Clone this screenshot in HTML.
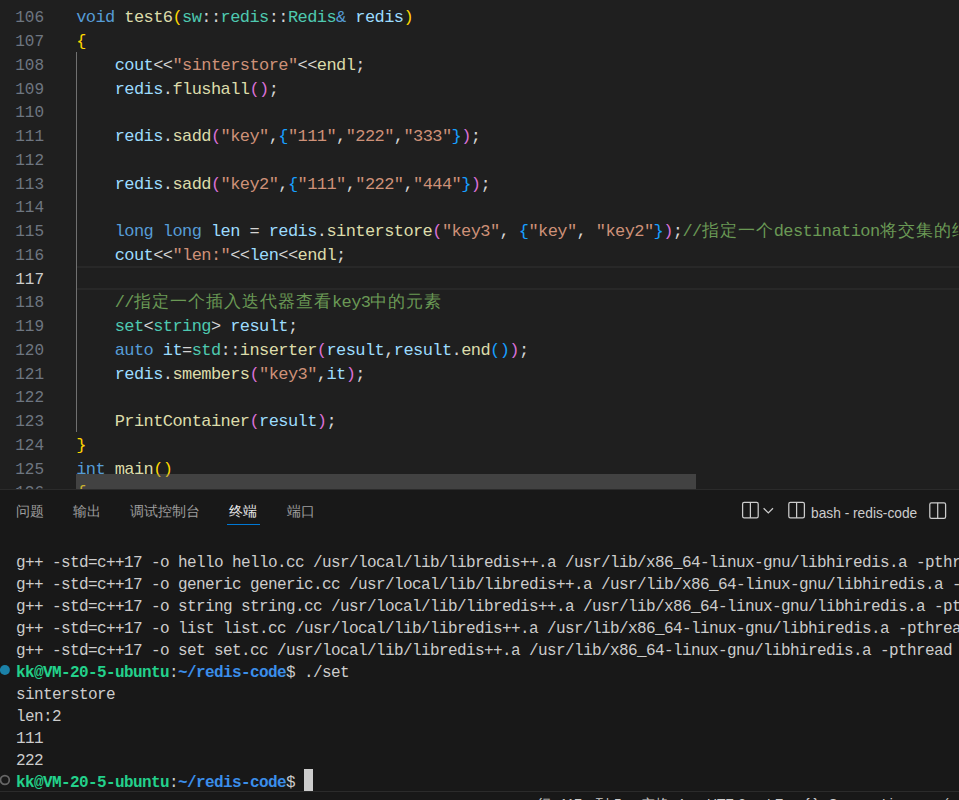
<!DOCTYPE html>
<html><head><meta charset="utf-8">
<style>
*{margin:0;padding:0;box-sizing:border-box}
html,body{width:959px;height:800px;overflow:hidden;background:#1f1f1f}
body{position:relative;font-family:"Liberation Mono",monospace}
#ed{position:absolute;left:0;top:0;width:959px;height:489px;background:#1f1f1f;overflow:hidden}
.ln{position:absolute;left:0;width:44px;text-align:right;font-size:16.03px;line-height:23.75px;height:23.75px;color:#6E7681;white-space:pre}
.ln.act{color:#CCCCCC}
.cl{position:absolute;margin-top:-1px;left:76.25px;font-size:17px;letter-spacing:-0.5815px;line-height:23.75px;height:23.75px;white-space:pre;color:#D4D4D4}
.cj{letter-spacing:1px;font-size:17px;line-height:0}
#hl{position:absolute;left:77px;top:266px;width:882px;height:24px;border-top:2px solid #282828;border-bottom:2px solid #282828}
#guide{position:absolute;left:76px;top:52px;width:1px;height:380px;background:#707070}
#hscroll{position:absolute;left:76px;top:474px;width:620px;height:15px;background:rgba(121,121,121,0.4)}
#bord{position:absolute;left:0;top:489px;width:959px;height:1px;background:#2b2b2b}
#panel{position:absolute;left:0;top:490px;width:959px;height:301px;background:#181818;overflow:hidden}
.tab{position:absolute;top:3.5px;font-size:13.75px;line-height:35px;color:#9D9D9D;font-family:"Liberation Sans",sans-serif;white-space:pre}
.tab.act{color:#E7E7E7}
#uline{position:absolute;left:227px;top:34px;width:33px;height:1px;background:#0078D4}
.tl{position:absolute;left:16px;font-size:16px;letter-spacing:-0.6014px;line-height:22px;height:22px;white-space:pre;color:#CCCCCC}
.tl b{font-weight:bold}
.st{position:absolute;top:3px;font-family:"Liberation Sans",sans-serif;font-size:13.75px;line-height:20px;color:#CCCCCC;white-space:pre}
#status{position:absolute;left:0;top:791px;width:959px;height:9px;background:#181818;border-top:1px solid #2b2b2b;overflow:hidden}
</style></head><body>
<div id="ed">
<div id="hl"></div>
<div id="guide"></div>
<div class="ln" style="top:7.25px">106</div>
<div class="cl" style="top:7.25px"><span style="color:#569CD6">void </span><span style="color:#DCDCAA">test6</span><span style="color:#FFD700">(</span><span style="color:#4EC9B0">sw</span><span style="color:#D4D4D4">::</span><span style="color:#4EC9B0">redis</span><span style="color:#D4D4D4">::</span><span style="color:#4EC9B0">Redis</span><span style="color:#569CD6">&amp;</span><span style="color:#D4D4D4"> </span><span style="color:#9CDCFE">redis</span><span style="color:#FFD700">)</span></div>
<div class="ln" style="top:31.00px">107</div>
<div class="cl" style="top:31.00px"><span style="color:#FFD700">{</span></div>
<div class="ln" style="top:54.75px">108</div>
<div class="cl" style="top:54.75px"><span style="color:#D4D4D4">    </span><span style="color:#9CDCFE">cout</span><span style="color:#D4D4D4">&lt;&lt;</span><span style="color:#CE9178">&quot;sinterstore&quot;</span><span style="color:#D4D4D4">&lt;&lt;</span><span style="color:#DCDCAA">endl</span><span style="color:#D4D4D4">;</span></div>
<div class="ln" style="top:78.50px">109</div>
<div class="cl" style="top:78.50px"><span style="color:#D4D4D4">    </span><span style="color:#9CDCFE">redis</span><span style="color:#D4D4D4">.</span><span style="color:#DCDCAA">flushall</span><span style="color:#DA70D6">()</span><span style="color:#D4D4D4">;</span></div>
<div class="ln" style="top:102.25px">110</div>
<div class="ln" style="top:126.00px">111</div>
<div class="cl" style="top:126.00px"><span style="color:#D4D4D4">    </span><span style="color:#9CDCFE">redis</span><span style="color:#D4D4D4">.</span><span style="color:#DCDCAA">sadd</span><span style="color:#DA70D6">(</span><span style="color:#CE9178">&quot;key&quot;</span><span style="color:#D4D4D4">,</span><span style="color:#179FFF">{</span><span style="color:#CE9178">&quot;111&quot;</span><span style="color:#D4D4D4">,</span><span style="color:#CE9178">&quot;222&quot;</span><span style="color:#D4D4D4">,</span><span style="color:#CE9178">&quot;333&quot;</span><span style="color:#179FFF">}</span><span style="color:#DA70D6">)</span><span style="color:#D4D4D4">;</span></div>
<div class="ln" style="top:149.75px">112</div>
<div class="ln" style="top:173.50px">113</div>
<div class="cl" style="top:173.50px"><span style="color:#D4D4D4">    </span><span style="color:#9CDCFE">redis</span><span style="color:#D4D4D4">.</span><span style="color:#DCDCAA">sadd</span><span style="color:#DA70D6">(</span><span style="color:#CE9178">&quot;key2&quot;</span><span style="color:#D4D4D4">,</span><span style="color:#179FFF">{</span><span style="color:#CE9178">&quot;111&quot;</span><span style="color:#D4D4D4">,</span><span style="color:#CE9178">&quot;222&quot;</span><span style="color:#D4D4D4">,</span><span style="color:#CE9178">&quot;444&quot;</span><span style="color:#179FFF">}</span><span style="color:#DA70D6">)</span><span style="color:#D4D4D4">;</span></div>
<div class="ln" style="top:197.25px">114</div>
<div class="ln" style="top:221.00px">115</div>
<div class="cl" style="top:221.00px"><span style="color:#D4D4D4">    </span><span style="color:#569CD6">long</span><span style="color:#D4D4D4"> </span><span style="color:#569CD6">long</span><span style="color:#9CDCFE"> len </span><span style="color:#D4D4D4">= </span><span style="color:#9CDCFE">redis</span><span style="color:#D4D4D4">.</span><span style="color:#DCDCAA">sinterstore</span><span style="color:#DA70D6">(</span><span style="color:#CE9178">&quot;key3&quot;</span><span style="color:#D4D4D4">, </span><span style="color:#179FFF">{</span><span style="color:#CE9178">&quot;key&quot;</span><span style="color:#D4D4D4">, </span><span style="color:#CE9178">&quot;key2&quot;</span><span style="color:#179FFF">}</span><span style="color:#DA70D6">)</span><span style="color:#D4D4D4">;</span><span style="color:#6A9955">//</span><span class="cj" style="color:#6A9955">指定一个</span><span style="color:#6A9955">destination</span><span class="cj" style="color:#6A9955">将交集的结</span></div>
<div class="ln" style="top:244.75px">116</div>
<div class="cl" style="top:244.75px"><span style="color:#D4D4D4">    </span><span style="color:#9CDCFE">cout</span><span style="color:#D4D4D4">&lt;&lt;</span><span style="color:#CE9178">&quot;len:&quot;</span><span style="color:#D4D4D4">&lt;&lt;</span><span style="color:#9CDCFE">len</span><span style="color:#D4D4D4">&lt;&lt;</span><span style="color:#DCDCAA">endl</span><span style="color:#D4D4D4">;</span></div>
<div class="ln act" style="top:268.50px">117</div>
<div class="ln" style="top:292.25px">118</div>
<div class="cl" style="top:292.25px"><span style="color:#D4D4D4">    </span><span style="color:#6A9955">//</span><span class="cj" style="color:#6A9955">指定一个插入迭代器查看</span><span style="color:#6A9955">key3</span><span class="cj" style="color:#6A9955">中的元素</span></div>
<div class="ln" style="top:316.00px">119</div>
<div class="cl" style="top:316.00px"><span style="color:#D4D4D4">    </span><span style="color:#4EC9B0">set</span><span style="color:#D4D4D4">&lt;</span><span style="color:#4EC9B0">string</span><span style="color:#D4D4D4">&gt;</span><span style="color:#D4D4D4"> </span><span style="color:#9CDCFE">result</span><span style="color:#D4D4D4">;</span></div>
<div class="ln" style="top:339.75px">120</div>
<div class="cl" style="top:339.75px"><span style="color:#D4D4D4">    </span><span style="color:#569CD6">auto</span><span style="color:#D4D4D4"> </span><span style="color:#9CDCFE">it</span><span style="color:#D4D4D4">=</span><span style="color:#4EC9B0">std</span><span style="color:#D4D4D4">::</span><span style="color:#DCDCAA">inserter</span><span style="color:#DA70D6">(</span><span style="color:#9CDCFE">result</span><span style="color:#D4D4D4">,</span><span style="color:#9CDCFE">result</span><span style="color:#D4D4D4">.</span><span style="color:#DCDCAA">end</span><span style="color:#179FFF">()</span><span style="color:#DA70D6">)</span><span style="color:#D4D4D4">;</span></div>
<div class="ln" style="top:363.50px">121</div>
<div class="cl" style="top:363.50px"><span style="color:#D4D4D4">    </span><span style="color:#9CDCFE">redis</span><span style="color:#D4D4D4">.</span><span style="color:#DCDCAA">smembers</span><span style="color:#DA70D6">(</span><span style="color:#CE9178">&quot;key3&quot;</span><span style="color:#D4D4D4">,</span><span style="color:#9CDCFE">it</span><span style="color:#DA70D6">)</span><span style="color:#D4D4D4">;</span></div>
<div class="ln" style="top:387.25px">122</div>
<div class="ln" style="top:411.00px">123</div>
<div class="cl" style="top:411.00px"><span style="color:#D4D4D4">    </span><span style="color:#DCDCAA">PrintContainer</span><span style="color:#DA70D6">(</span><span style="color:#9CDCFE">result</span><span style="color:#DA70D6">)</span><span style="color:#D4D4D4">;</span></div>
<div class="ln" style="top:434.75px">124</div>
<div class="cl" style="top:434.75px"><span style="color:#FFD700">}</span></div>
<div class="ln" style="top:458.50px">125</div>
<div class="cl" style="top:458.50px"><span style="color:#569CD6">int</span><span style="color:#D4D4D4"> </span><span style="color:#DCDCAA">main</span><span style="color:#FFD700">()</span></div>
<div class="ln" style="top:482.25px">126</div>
<div class="cl" style="top:482.25px"><span style="color:#FFD700">{</span></div>
<div id="hscroll"></div>
</div>
<div id="bord"></div>
<div id="panel">
<div class="tab" style="left:16px">问题</div>
<div class="tab" style="left:73px">输出</div>
<div class="tab" style="left:130px">调试控制台</div>
<div class="tab act" style="left:229px">终端</div>
<div class="tab" style="left:287px">端口</div>
<div id="uline"></div>
<svg style="position:absolute;left:0;top:0" width="959" height="40" viewBox="0 0 959 40">
<g fill="none" stroke="#CCCCCC" stroke-width="1.25">
<rect x="742.6" y="12.3" width="15.6" height="15.6" rx="1.6"/>
<line x1="750.4" y1="12.3" x2="750.4" y2="27.9"/>
<polyline points="763.6,18.2 768.3,22.9 773,18.2"/>
<rect x="788.8" y="12.3" width="15.6" height="15.6" rx="1.6"/>
<line x1="796.6" y1="12.3" x2="796.6" y2="27.9"/>
<rect x="929.8" y="12.8" width="15.8" height="15.6" rx="1.6"/>
<line x1="937.7" y1="12.8" x2="937.7" y2="28.4"/>
</g></svg>
<div class="tab" style="left:811px;top:6px;color:#CCCCCC">bash - redis-code</div>

</div>
<div id="term" style="position:absolute;left:0;top:0;width:959px;height:791px;pointer-events:none;overflow:hidden">
<div class="tl" style="top:551.70px"><span style="color:#CCCCCC">g++ -std=c++17 -o hello hello.cc /usr/local/lib/libredis++.a /usr/lib/x86_64-linux-gnu/libhiredis.a -pthread</span></div>
<div class="tl" style="top:573.70px"><span style="color:#CCCCCC">g++ -std=c++17 -o generic generic.cc /usr/local/lib/libredis++.a /usr/lib/x86_64-linux-gnu/libhiredis.a -pthread</span></div>
<div class="tl" style="top:595.70px"><span style="color:#CCCCCC">g++ -std=c++17 -o string string.cc /usr/local/lib/libredis++.a /usr/lib/x86_64-linux-gnu/libhiredis.a -pthread</span></div>
<div class="tl" style="top:617.70px"><span style="color:#CCCCCC">g++ -std=c++17 -o list list.cc /usr/local/lib/libredis++.a /usr/lib/x86_64-linux-gnu/libhiredis.a -pthread</span></div>
<div class="tl" style="top:639.70px"><span style="color:#CCCCCC">g++ -std=c++17 -o set set.cc /usr/local/lib/libredis++.a /usr/lib/x86_64-linux-gnu/libhiredis.a -pthread</span></div>
<div class="tl" style="top:661.70px"><b style="color:#23D18B">kk@VM-20-5-ubuntu</b><span style="color:#CCCCCC">:</span><b style="color:#3B8EEA">~/redis-code</b><span style="color:#CCCCCC">$ ./set</span></div>
<div class="tl" style="top:683.70px"><span style="color:#CCCCCC">sinterstore</span></div>
<div class="tl" style="top:705.70px"><span style="color:#CCCCCC">len:2</span></div>
<div class="tl" style="top:727.70px"><span style="color:#CCCCCC">111</span></div>
<div class="tl" style="top:749.70px"><span style="color:#CCCCCC">222</span></div>
<div class="tl" style="top:771.70px"><b style="color:#23D18B">kk@VM-20-5-ubuntu</b><span style="color:#CCCCCC">:</span><b style="color:#3B8EEA">~/redis-code</b><span style="color:#CCCCCC">$ </span></div>
<svg style="position:absolute;left:0;top:0" width="20" height="800">
<circle cx="4.9" cy="670" r="5" fill="#1B81A8"/>
<circle cx="4.9" cy="780" r="4.4" fill="none" stroke="#666666" stroke-width="1.7"/>
</svg>
<div style="position:absolute;left:304px;top:769px;width:9px;height:22px;background:#CCCCCC"></div>

</div>
<div id="status">
<div class="st" style="left:537px">行</div>
<div class="st" style="left:560px">117，</div>
<div class="st" style="left:595px">列</div>
<div class="st" style="left:614px">5</div>
<div class="st" style="left:641px">空格: 4</div>
<div class="st" style="left:707px">UTF-8</div>
<div class="st" style="left:767px">LF</div>
<div class="st" style="left:805px">{ }</div>
<div class="st" style="left:828px">C++</div>
<div class="st" style="left:882px">Linux</div>
<div class="st" style="left:944px">(</div>
</div>
</body></html>
